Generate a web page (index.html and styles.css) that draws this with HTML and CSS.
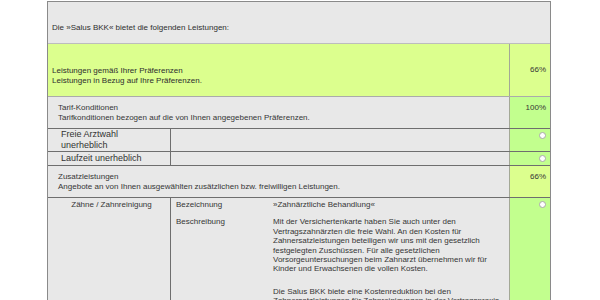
FILE: index.html
```html
<!DOCTYPE html>
<html lang="de">
<head>
<meta charset="utf-8">
<title>Leistungen</title>
<link rel="stylesheet" href="styles.css">
</head>
<body>
<div class="panel">
  <div class="head">Die »Salus BKK« bietet die folgenden Leistungen:</div>

  <div class="row pref">
    <div class="main">Leistungen gemäß Ihrer Präferenzen<br>Leistungen in Bezug auf Ihre Präferenzen.</div>
    <div class="pct pct-mid yellow">66%</div>
  </div>

  <div class="row sect">
    <div class="main">Tarif-Konditionen<br>Tarifkonditionen bezogen auf die von Ihnen angegebenen Präferenzen.</div>
    <div class="pct pct-top green">100%</div>
  </div>

  <div class="row sub">
    <div class="label lbl-big">Freie Arztwahl<br>unerheblich</div>
    <div class="mid"></div>
    <div class="pct pct-icon green"><span class="dot"></span></div>
  </div>

  <div class="row sub">
    <div class="label lbl-big pad1">Laufzeit unerheblich</div>
    <div class="mid"></div>
    <div class="pct pct-icon green"><span class="dot"></span></div>
  </div>

  <div class="row sect">
    <div class="main">Zusatzleistungen<br>Angebote an von Ihnen ausgewählten zusätzlichen bzw. freiwilligen Leistungen.</div>
    <div class="pct pct-top yellow">66%</div>
  </div>

  <div class="row sub detail">
    <div class="label lbl-center">Zähne / Zahnreinigung</div>
    <div class="mid">
      <div class="facts">
        <div class="k">Bezeichnung</div>
        <div class="v">»Zahnärztliche Behandlung«</div>
        <div class="k">Beschreibung</div>
        <div class="v">
          <p>Mit der Versichertenkarte haben Sie auch unter den Vertragszahnärzten die freie Wahl. An den Kosten für Zahnersatzleistungen beteiligen wir uns mit den gesetzlich festgelegten Zuschüssen. Für alle gesetzlichen Vorsorgeuntersuchungen beim Zahnarzt übernehmen wir für Kinder und Erwachsenen die vollen Kosten.</p>
          <p>Die Salus BKK biete eine Kostenreduktion bei den Zahnersatzleistungen für Zahnreinigungen in der Vertragspraxis an.</p>
        </div>
      </div>
    </div>
    <div class="pct pct-icon green"><span class="dot"></span></div>
  </div>
</div>
</body>
</html>
```

FILE: styles.css
```css
* { box-sizing: border-box; }

html, body {
  margin: 0;
  padding: 0;
  background: #fff;
}

body {
  font-family: "Liberation Sans", Arial, sans-serif;
  font-size: 8px;
  color: #363636;
  overflow: hidden;
}

.panel {
  width: 504px;
  margin: 1px 0 0 47px;
  border: 1px solid #8a8a8a;
  border-bottom: none;
  background: #e8e8e8;
}

.head {
  padding: 21px 4px 10px;
  line-height: 10px;
  border-bottom: 1px solid #bdbdbd;
  color: #2e2e2e;
}

.row {
  display: flex;
}

.pref {
  background: #dcff8e;
  border-bottom: 1px solid #ababab;
}

.pref .main {
  flex: 1;
  padding: 22px 4px 10px;
  line-height: 10px;
  color: #2e2e2e;
}

.sect {
  border-bottom: 1px solid #6e6e6e;
}

.sect .main {
  flex: 1;
  padding: 6px 10px 5px;
  line-height: 10px;
}

.sub {
  border-bottom: 1px solid #6e6e6e;
}

.label {
  width: 123px;
  flex: none;
  border-right: 1px solid #6e6e6e;
}

.lbl-big {
  font-size: 9px;
  line-height: 11px;
  padding: 0 4px 0 13px;
  color: #333;
}

.pad1 {
  padding-top: 1px;
  padding-bottom: 1px;
}

.lbl-center {
  text-align: center;
  padding: 2px 0 0 5px;
  line-height: 9.4px;
}

.mid {
  flex: 1;
}

.pct {
  width: 41px;
  flex: none;
  border-left: 1px solid #a3a896;
  text-align: right;
  padding-right: 4px;
  line-height: 10px;
}

.pct-mid {
  display: flex;
  align-items: center;
  justify-content: flex-end;
}

.pct-top {
  padding-top: 6px;
}

.pct-icon {
  padding-top: 3px;
  line-height: 0;
}

.yellow { background: #dcff8e; }
.green { background: #c2ff8e; }

.dot {
  display: inline-block;
  width: 7px;
  height: 7px;
  border-radius: 50%;
  background: #fff;
  border: 1.5px solid #a9a9a9;
}

.detail {
  border-bottom: none;
}

.detail .mid {
  padding: 2px 0 0 5px;
}

.facts {
  display: grid;
  grid-template-columns: 97px 232px;
  row-gap: 8px;
  line-height: 9.4px;
}

.facts p {
  margin: 0 0 13px;
}
```
